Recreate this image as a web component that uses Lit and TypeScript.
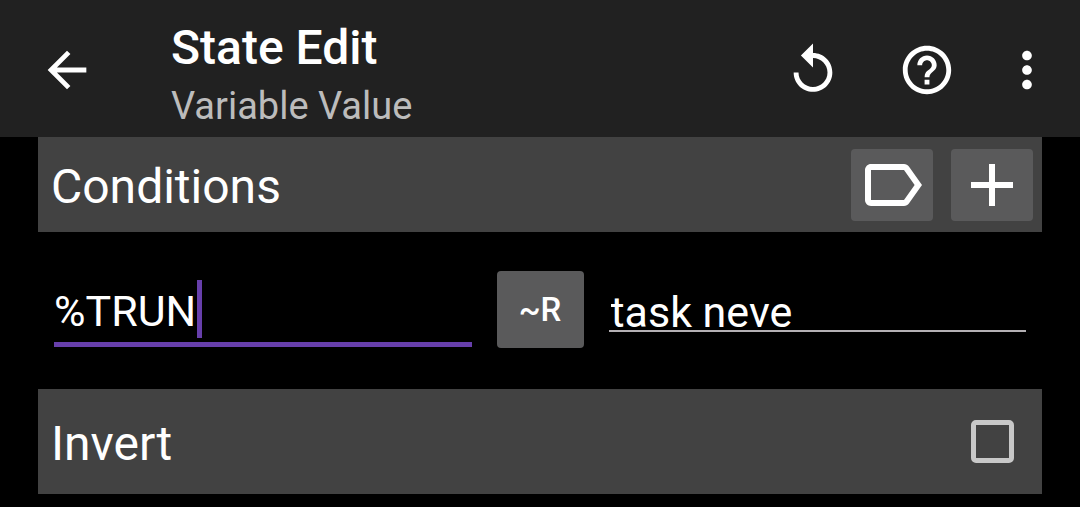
import { LitElement, html, css, svg } from "lit";
import { customElement, state } from "lit/decorators.js";

const icons = {
  back: svg`<path d="M20 11H7.83l5.59-5.59L12 4l-8 8 8 8 1.41-1.41L7.83 13H20v-2z"/>`,
  revert: svg`<path d="M12 5V1L7 6l5 5V7c3.31 0 6 2.69 6 6s-2.69 6-6 6-6-2.69-6-6H4c0 4.42 3.58 8 8 8s8-3.58 8-8-3.58-8-8-8z"/>`,
  help: svg`<path d="M11 18h2v-2h-2v2zm1-16C6.48 2 2 6.48 2 12s4.48 10 10 10 10-4.48 10-10S17.52 2 12 2zm0 18c-4.41 0-8-3.59-8-8s3.59-8 8-8 8 3.59 8 8-3.59 8-8 8zm0-14c-2.21 0-4 1.79-4 4h2c0-1.1.9-2 2-2s2 .9 2 2c0 2-3 1.75-3 5h2c0-2.25 3-2.5 3-5 0-2.21-1.79-4-4-4z"/>`,
  more: svg`<path d="M12 8c1.1 0 2-.9 2-2s-.9-2-2-2-2 .9-2 2 .9 2 2 2zm0 2c-1.1 0-2 .9-2 2s.9 2 2 2 2-.9 2-2-.9-2-2-2zm0 6c-1.1 0-2 .9-2 2s.9 2 2 2 2-.9 2-2-.9-2-2-2z"/>`,
  label: svg`<path d="M17.63 5.84C17.27 5.33 16.67 5 16 5L5 5.01C3.9 5.01 3 5.9 3 7v10c0 1.1.9 1.99 2 1.99L16 19c.67 0 1.27-.33 1.63-.84L22 12l-4.37-6.16zM16 17H5V7h11l3.55 5L16 17z"/>`,
  add: svg`<path d="M19 13h-6v6h-2v-6H5v-2h6V5h2v6h6v2z"/>`,
};

const icon = (name: keyof typeof icons) =>
  html`<svg viewBox="0 0 24 24" aria-hidden="true">${icons[name]}</svg>`;

@customElement("app-root")
export class AppRoot extends LitElement {
  @state() private variable = "%TRUN";
  @state() private value = "task neve";
  @state() private invert = false;

  static styles = css`
    :host {
      display: block;
      min-height: 100vh;
      box-sizing: border-box;
      background: #000;
      color: #fff;
      font-family: Roboto, "Liberation Sans", sans-serif;
    }
    * {
      box-sizing: border-box;
    }
    svg {
      display: block;
      fill: currentColor;
    }
    button,
    input {
      margin: 0;
      padding: 0;
      border: 0;
      outline: 0;
      color: inherit;
      font: inherit;
      background: none;
    }
    .bar {
      display: flex;
      align-items: center;
      min-height: 137px;
      padding: 2px 24px 0 38px;
      background: #212121;
    }
    .bar svg {
      width: 58px;
      height: 58px;
    }
    .titles {
      flex: 1;
      display: grid;
      gap: 8px;
      padding-top: 9px;
      margin-left: 75px;
    }
    .title {
      margin: 0;
      font-size: 48px;
      line-height: 56px;
      font-weight: 500;
    }
    .subtitle {
      margin: 0;
      font-size: 38px;
      line-height: 44px;
      color: #bcbcbc;
    }
    .actions {
      display: flex;
      gap: 56px;
    }
    .actions .overflow {
      margin-left: -14px;
    }
    .content {
      padding: 0 38px;
    }
    .section {
      display: flex;
      align-items: center;
      gap: 18px;
      min-height: 95px;
      padding: 1px 9px 0 13px;
      background: #424242;
      font-size: 48px;
      line-height: 56px;
    }
    .section.tall {
      min-height: 105px;
      padding: 0 28px 0 13px;
    }
    .name {
      flex: 1;
      margin: 0;
      padding-top: 4px;
      font: inherit;
    }
    .tool {
      display: grid;
      place-items: center;
      width: 82px;
      height: 72px;
      border-radius: 4px;
      background: #5a5a5b;
    }
    .tool svg {
      width: 72px;
      height: 72px;
    }
    .condition {
      display: grid;
      grid-template-columns: 1fr 87px 1fr;
      align-items: center;
      column-gap: 25px;
      min-height: 157px;
      padding: 0 16px 2px;
    }
    .field {
      position: relative;
      font-size: 43px;
      line-height: 50px;
      border-bottom: 2px solid #b4b0b4;
    }
    .field input {
      display: block;
      width: 100%;
      height: 50px;
      margin-bottom: -7px;
      padding-left: 2px;
      caret-color: transparent;
    }
    .field.active {
      margin-top: 8px;
      padding: 6px 0;
      border-bottom: 5px solid #673fab;
    }
    .field.active input {
      margin-bottom: 0;
      padding-left: 0;
    }
    .caret {
      position: absolute;
      left: 143px;
      top: 0;
      width: 5px;
      height: 58px;
      background: #673fab;
    }
    .operator {
      height: 77px;
      border-radius: 4px;
      background: #5a5a5b;
      font-size: 33px;
      font-weight: 500;
    }
    .check {
      appearance: none;
      width: 43px;
      height: 43px;
      border: 5px solid #c8c8c8;
      border-radius: 5px;
    }
    .check:checked {
      background: #c8c8c8;
    }
  `;

  render() {
    return html`
      <header class="bar">
        <button aria-label="Back">${icon("back")}</button>
        <div class="titles">
          <h1 class="title">State Edit</h1>
          <p class="subtitle">Variable Value</p>
        </div>
        <div class="actions">
          <button aria-label="Revert">${icon("revert")}</button>
          <button aria-label="Help">${icon("help")}</button>
          <button class="overflow" aria-label="More options">${icon("more")}</button>
        </div>
      </header>
      <main class="content">
        <div class="section">
          <h2 class="name">Conditions</h2>
          <button class="tool" aria-label="Label">${icon("label")}</button>
          <button class="tool" aria-label="Add condition">${icon("add")}</button>
        </div>
        <div class="condition">
          <div class="field active">
            <input
              type="text"
              aria-label="Variable"
              spellcheck="false"
              .value=${this.variable}
              @input=${(e: Event) => (this.variable = (e.target as HTMLInputElement).value)}
            />
            <span class="caret"></span>
          </div>
          <button class="operator">~R</button>
          <div class="field plain">
            <input
              type="text"
              aria-label="Value"
              spellcheck="false"
              .value=${this.value}
              @input=${(e: Event) => (this.value = (e.target as HTMLInputElement).value)}
            />
          </div>
        </div>
        <div class="section tall">
          <label class="name" for="invert">Invert</label>
          <input
            class="check"
            id="invert"
            type="checkbox"
            .checked=${this.invert}
            @change=${(e: Event) => (this.invert = (e.target as HTMLInputElement).checked)}
          />
        </div>
      </main>
    `;
  }
}
